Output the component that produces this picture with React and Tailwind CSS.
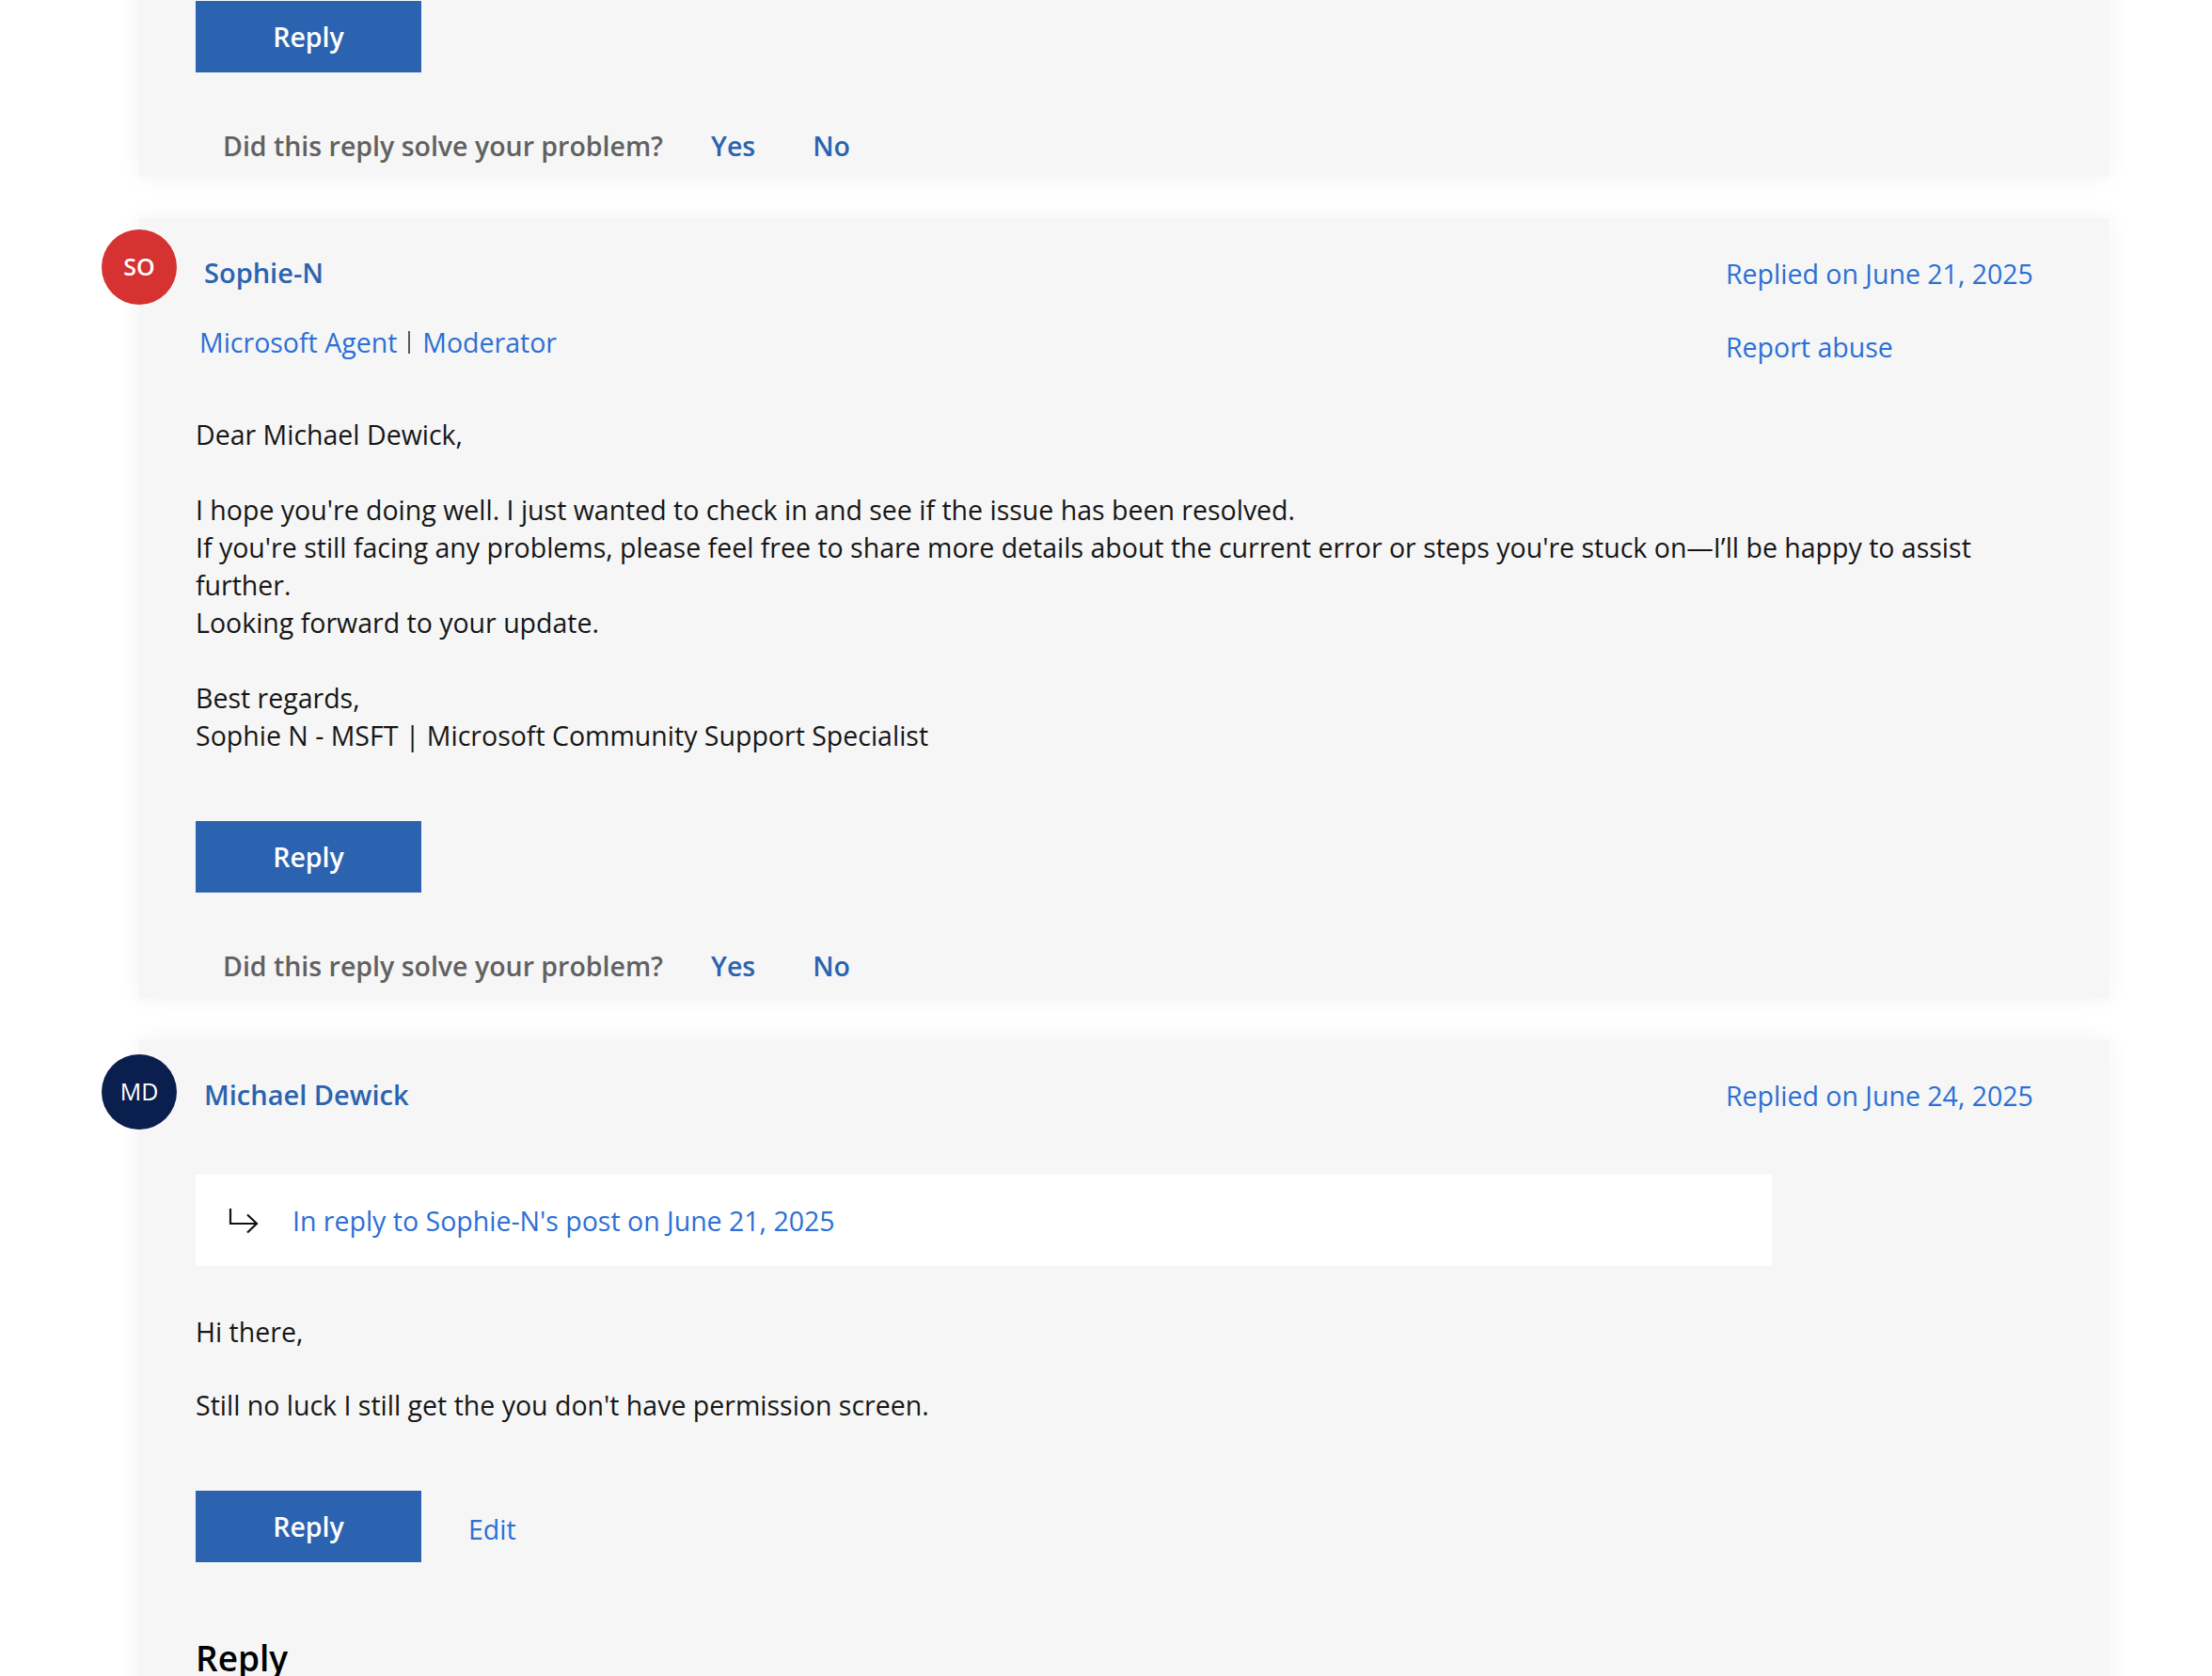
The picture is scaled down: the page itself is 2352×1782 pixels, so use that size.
import React from "react";

const ReplyButton = () => (
  <button className="w-[240px] h-[76px] bg-[#2b63b0] text-white text-[28.5px] font-semibold leading-none">
    Reply
  </button>
);

const Feedback = () => (
  <div className="mt-[58px] ml-[29px] flex items-center text-[28.5px] leading-[40px] font-semibold">
    <span className="text-[#616161]">Did this reply solve your problem?</span>
    <button className="ml-[51px] text-[#2b63b0] font-semibold">Yes</button>
    <button className="ml-[61px] text-[#2b63b0] font-semibold">No</button>
  </div>
);

const Avatar = ({ initials, color, bold }) => (
  <div
    className={`absolute left-[-40px] w-[80px] h-[80px] rounded-full flex items-center justify-center text-white text-[25px] ${color} ${bold ? "font-semibold" : "font-normal"}`}
  >
    {initials}
  </div>
);

const ReplyArrow = () => (
  <svg width="32" height="28" viewBox="0 0 32 28" fill="none" stroke="#111" strokeWidth="2.2">
    <path d="M2 1 V17 H30" />
    <path d="M20 7.5 L30 17 L20 26.5" />
  </svg>
);

const Card = ({ children, className = "" }) => (
  <div className={`relative bg-[#f6f6f6] shadow-[0_0_24px_rgba(0,0,0,0.06)] pl-[60px] pr-[77px] ${className}`}>
    {children}
  </div>
);

export default function App() {
  return (
    <div className="min-h-screen bg-white overflow-hidden font-['Open_Sans',sans-serif] text-[#161616]">
      <div className="pl-[148px] pr-[110px] flex flex-col gap-[44px]">
        {/* previous answer, scrolled past */}
        <Card className="-mt-[40px] pt-[41px] pb-[13px]">
          <ReplyButton />
          <Feedback />
        </Card>

        {/* moderator reply */}
        <Card className="pt-[36px] pb-[15px]">
          <div className="top-[12px] absolute left-0">
            <Avatar initials="SO" color="bg-[#d63232]" bold />
          </div>
          <div className="flex justify-between items-start">
            <div className="pl-[9px] pt-[2px] text-[29px] leading-[40px] font-semibold text-[#2b63b0]">Sophie-N</div>
            <div className="mt-[3px] w-[330px] text-[28.5px] leading-[40px] text-[#2c6fd6]">Replied on June 21, 2025</div>
          </div>
          <div className="mt-[33px] flex justify-between items-start">
            <div className="pl-[4px] text-[28.5px] leading-[40px] text-[#2c6fd6] flex items-center">
              <span>Microsoft Agent</span>
              <span className="inline-block w-[2px] h-[24px] bg-[#5a5a5a] ml-[12px] mr-[13px]" />
              <span>Moderator</span>
            </div>
            <div className="mt-[5px] w-[330px] text-[28.5px] leading-[40px] text-[#2c6fd6]">Report abuse</div>
          </div>
          <div className="mt-[53px] text-[28.5px] leading-[40px]">
            <p>Dear Michael Dewick,</p>
            <p className="h-[40px]" />
            <p>I hope you're doing well. I just wanted to check in and see if the issue has been resolved.</p>
            <p>
              If you're still facing any problems, please feel free to share more details about the current error or steps you're stuck on—I’ll be happy to assist further.
            </p>
            <p>Looking forward to your update.</p>
            <p className="h-[40px]" />
            <p>Best regards,</p>
            <p>Sophie N - MSFT | Microsoft Community Support Specialist</p>
          </div>
          <div className="mt-[71px]">
            <ReplyButton />
          </div>
          <Feedback />
        </Card>

        {/* user reply */}
        <Card className="pt-[36px] pb-[200px]">
          <div className="top-[15px] absolute left-0">
            <Avatar initials="MD" color="bg-[#0b1f4e]" />
          </div>
          <div className="flex justify-between items-start">
            <div className="pl-[9px] pt-[2px] text-[29px] leading-[40px] font-semibold text-[#2b63b0]">Michael Dewick</div>
            <div className="mt-[3px] w-[330px] text-[28.5px] leading-[40px] text-[#2c6fd6]">Replied on June 24, 2025</div>
          </div>
          <div className="mt-[64px] w-[1676px] h-[97px] bg-white flex items-center pl-[35px]">
            <ReplyArrow />
            <span className="ml-[36px] text-[28.5px] leading-[40px] text-[#2c6fd6]">In reply to Sophie-N's post on June 21, 2025</span>
          </div>
          <div className="mt-[50px] text-[28.5px] leading-[40px]">
            <p>Hi there,</p>
            <p className="h-[38px]" />
            <p>Still no luck I still get the you don't have permission screen.</p>
          </div>
          <div className="mt-[71px] flex items-center">
            <ReplyButton />
            <a className="ml-[50px] pt-[6px] text-[28.5px] leading-[40px] text-[#2c6fd6]">Edit</a>
          </div>
          <h2 className="mt-[78px] text-[37px] leading-[48px] font-semibold text-black">Reply</h2>
        </Card>
      </div>
    </div>
  );
}
